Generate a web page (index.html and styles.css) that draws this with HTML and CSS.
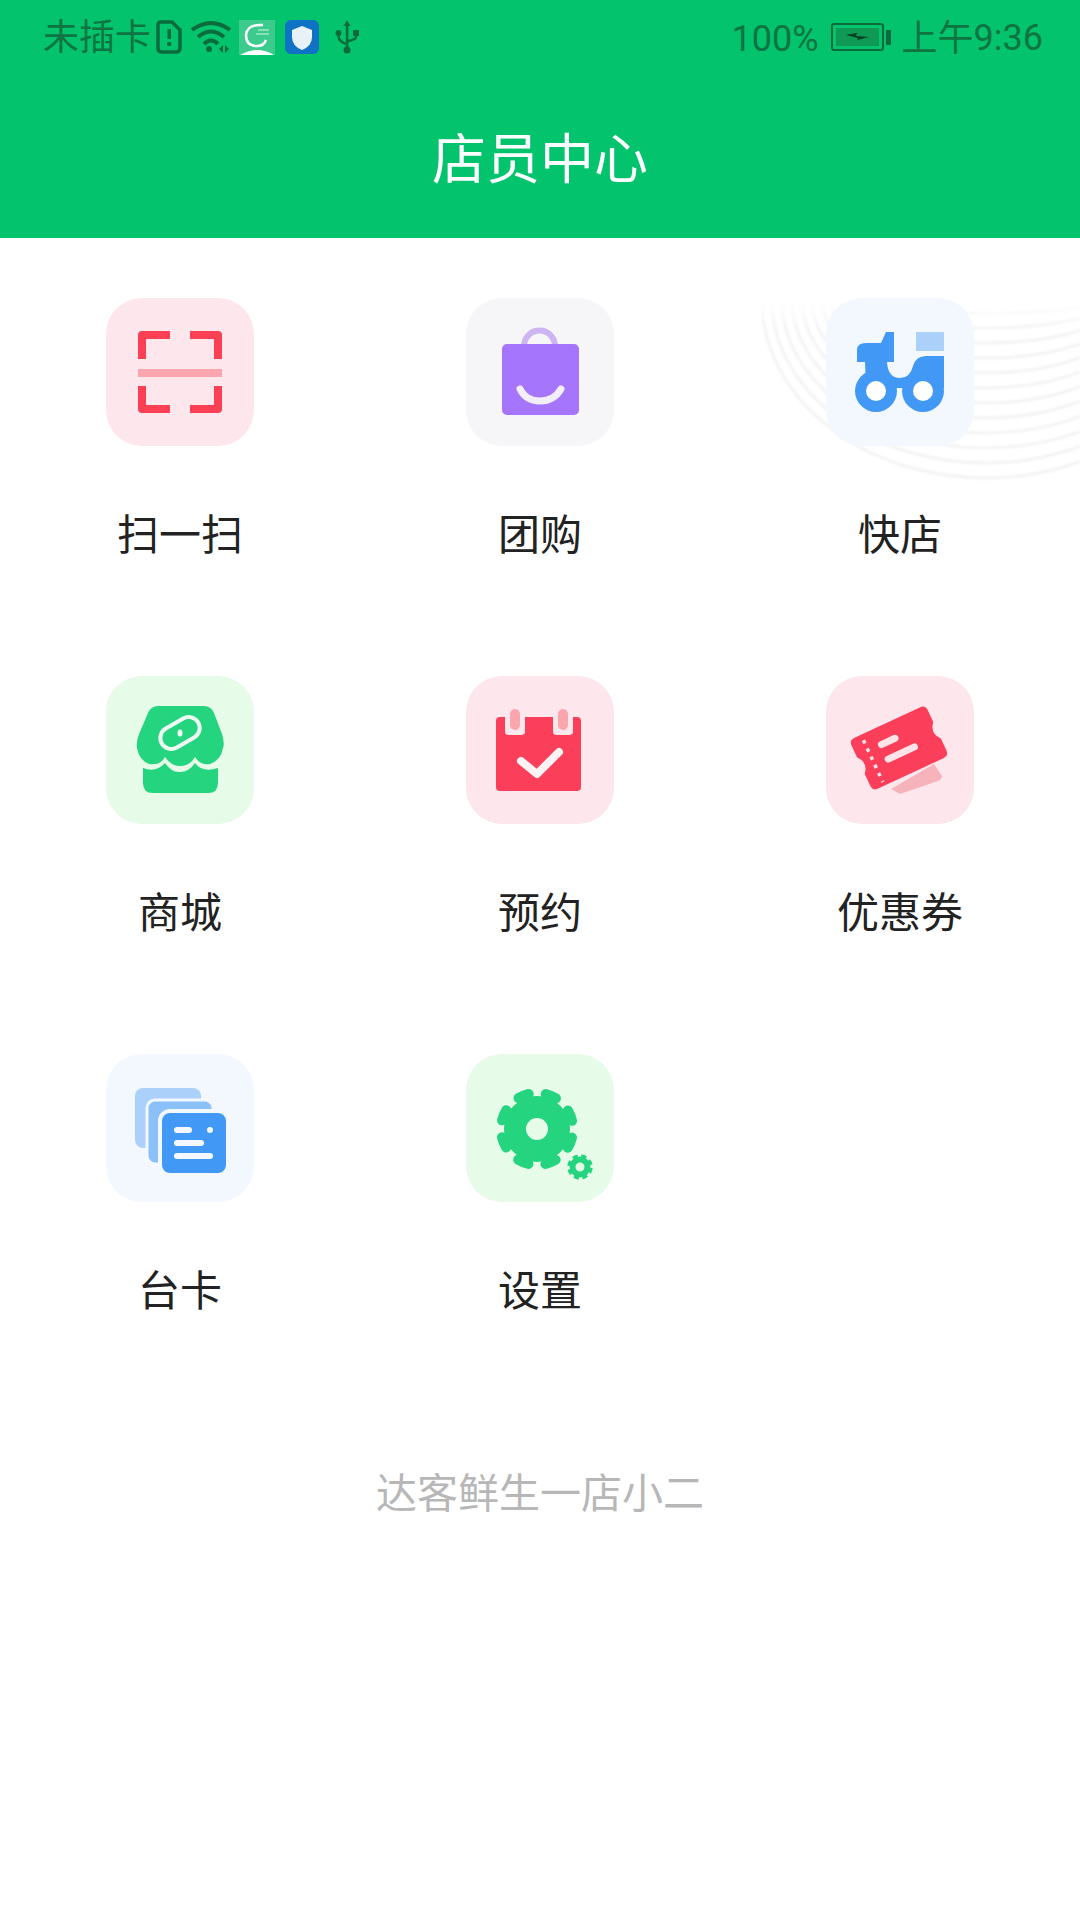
FILE: index.html
```html
<!DOCTYPE html>
<html>
<head>
    <title>店员中心</title>
    <link rel="stylesheet" href="styles.css">
</head>
<body>
    <div class="header">
        <div class="status-bar">
            <div class="status-left">
                <span class="carrier">未插卡</span>
                <svg class="sim" width="26" height="34" viewBox="0 0 26 34">
                    <path d="M5 2H16L24 10V28Q24 32 20 32H6Q2 32 2 28V5Q2 2 5 2Z" fill="none" stroke="#0b6b3c" stroke-width="3.500"/>
                    <rect x="11.500" y="9" width="3.500" height="10" fill="#0b6b3c"/>
                    <circle cx="13.200" cy="24" r="2.200" fill="#0b6b3c"/>
                </svg>
                <svg class="wifi" width="40" height="34" viewBox="0 0 40 34">
                    <g fill="none" stroke="#0b6b3c" stroke-width="4">
                        <path d="M1 10Q20 -4 39 10"/>
                        <path d="M7 17Q20 6 33 17"/>
                        <path d="M13 24Q20 17 27 24"/>
                    </g>
                    <circle cx="18" cy="29" r="3" fill="#0b6b3c"/>
                    <path d="M28 29L32 25V33ZM34 25L38 29L34 33Z" fill="#0b6b3c"/>
                </svg>
                <svg class="app-logo" width="36" height="35" viewBox="0 0 36 35">
                    <rect width="36" height="35" fill="#3ccb8d"/>
                    <path d="M24 5Q8 4 7 15Q7 26 18 26Q25 26 27 20" fill="none" stroke="#fff" stroke-width="2.500"/>
                    <path d="M17 14H30M19 10H30" stroke="#d6f5e6" stroke-width="1"/>
                    <path d="M1 35Q18 25 35 35Z" fill="#fff"/>
                </svg>
                <svg class="shield" width="34" height="34" viewBox="0 0 34 34">
                    <rect width="34" height="34" rx="6" fill="#0f72c4"/>
                    <path d="M17 6L27 10V17Q27 26 17 30Q7 26 7 17V10Z" fill="#e8f1f5"/>
                </svg>
                <svg class="usb" width="24" height="34" viewBox="0 0 24 34">
                    <g fill="#0b6b3c">
                        <path d="M12 0L15.500 6H8.500Z"/>
                        <rect x="10.800" y="4" width="2.600" height="24"/>
                        <circle cx="3.500" cy="13" r="3"/>
                        <rect x="18" y="10" width="6" height="6"/>
                        <circle cx="12" cy="30" r="3.500"/>
                    </g>
                    <path d="M3.500 14V17Q4 21 11 24M21 15V17Q20 20 13 21" fill="none" stroke="#0b6b3c" stroke-width="2.400"/>
                </svg>
            </div>
            <div class="status-right">
                <span class="percent">100%</span>
                <svg class="battery" width="60" height="30" viewBox="0 0 60 30">
                    <rect x="1" y="2" width="51" height="26" rx="2" fill="none" stroke="#0b6b3c" stroke-width="2"/>
                    <rect x="5" y="6" width="43" height="18" fill="#0e9a55"/>
                    <path d="M15 13L26 11L25 14L38 15L26 18L27 16Z" fill="#063d22"/>
                    <rect x="55" y="8" width="5" height="15" rx="1" fill="#0b6b3c"/>
                </svg>
                <span class="clock"><span class="cjk">上午</span><span>9:36</span></span>
            </div>
        </div>
        <h1 class="title">店员中心</h1>
    </div>

    <div class="menu">
        <!-- faint rings behind the third icon -->
        <svg class="rings" width="320" height="190" viewBox="0 0 320 190">
            <g fill="none" stroke="#f3f3f3" stroke-width="3">
                <ellipse cx="226" cy="0" rx="224" ry="178"/>
                <ellipse cx="226" cy="0" rx="214" ry="163"/>
                <ellipse cx="226" cy="0" rx="204" ry="148"/>
                <ellipse cx="226" cy="0" rx="194" ry="133"/>
                <ellipse cx="226" cy="0" rx="184" ry="118"/>
                <ellipse cx="226" cy="0" rx="174" ry="103"/>
                <ellipse cx="226" cy="0" rx="164" ry="88"/>
                <ellipse cx="226" cy="0" rx="154" ry="73"/>
                <ellipse cx="226" cy="0" rx="144" ry="58"/>
                <ellipse cx="226" cy="0" rx="134" ry="43"/>
                <ellipse cx="226" cy="0" rx="124" ry="28"/>
                <ellipse cx="226" cy="0" rx="114" ry="13"/>
            </g>
        </svg>

        <div class="menu-item">
            <div class="icon tint-pink">
                <svg width="148" height="148" viewBox="0 0 148 148">
                    <path d="M36 61V37H64M84 37H112V61M36 88V111H64M84 111H112V88" fill="none" stroke="#fb4056" stroke-width="8" stroke-linejoin="round"/>
                    <rect x="32" y="71" width="84" height="8" fill="#fba6af"/>
                </svg>
            </div>
            <div class="label">扫一扫</div>
        </div>

        <div class="menu-item">
            <div class="icon tint-grey">
                <svg width="148" height="148" viewBox="0 0 148 148">
                    <path d="M58 48A15.500 15.500 0 0 1 89 48" fill="none" stroke="#cdb4f2" stroke-width="6"/>
                    <rect x="36" y="46" width="77" height="71" rx="5" fill="#a576fb"/>
                    <path d="M54 91Q60 103 74 103Q88 103 95 91" fill="none" stroke="#f3eefc" stroke-width="7" stroke-linecap="round"/>
                </svg>
            </div>
            <div class="label">团购</div>
        </div>

        <div class="menu-item">
            <div class="icon tint-blue">
                <svg width="148" height="148" viewBox="0 0 148 148">
                    <rect x="90" y="34" width="28" height="19" fill="#abd0fa"/>
                    <g fill="#4299f5">
                        <path d="M31 64V52Q31 45 40 45H55L60 34H68V64Z"/>
                        <path d="M39 64H61Q62 80 74 80Q84 80 87 68Q90 58 100 58H118V90H40Z"/>
                        <circle cx="50" cy="93" r="21"/>
                        <circle cx="97" cy="93" r="21"/>
                    </g>
                    <circle cx="50" cy="93" r="10" fill="#fff"/>
                    <circle cx="97" cy="93" r="10" fill="#fff"/>
                </svg>
            </div>
            <div class="label">快店</div>
        </div>

        <div class="menu-item">
            <div class="icon tint-green">
                <svg width="148" height="148" viewBox="0 0 148 148">
                    <path d="M52 30H98Q105 30 108 37L116 58Q119 68 117 72Q115 84 104 88Q95 90 89 81Q84 90 74 90Q65 90 59 81Q54 90 43 88Q33 84 31 72Q30 66 33 58L42 37Q45 30 52 30Z" fill="#25d47e"/>
                    <path d="M37 92Q50 97 59 87Q66 97 74 96Q83 96 89 87Q96 97 112 92V107Q112 117 102 117H47Q37 117 37 107Z" fill="#25d47e"/>
                    <rect x="53" y="46" width="42" height="22" rx="11" transform="rotate(-30 74 57)" fill="none" stroke="#eefbf2" stroke-width="4"/>
                    <ellipse cx="74" cy="57" rx="2.500" ry="3.500" fill="#eefbf2"/>
                </svg>
            </div>
            <div class="label">商城</div>
        </div>

        <div class="menu-item">
            <div class="icon tint-pink">
                <svg width="148" height="148" viewBox="0 0 148 148">
                    <rect x="30" y="41" width="85" height="74" rx="4" fill="#fb3f5b"/>
                    <path d="M39 40H59V56Q59 59 55 59H43Q39 59 39 56ZM87 40H107V56Q107 59 103 59H91Q87 59 87 56Z" fill="#fde6ec"/>
                    <rect x="44" y="33" width="10" height="21" rx="5" fill="#fba6af"/>
                    <rect x="92" y="33" width="10" height="21" rx="5" fill="#fba6af"/>
                    <path d="M55 85L71 98L93 76" fill="none" stroke="#fdf3f5" stroke-width="8" stroke-linecap="round" stroke-linejoin="round"/>
                </svg>
            </div>
            <div class="label">预约</div>
        </div>

        <div class="menu-item">
            <div class="icon tint-pink">
                <svg width="148" height="148" viewBox="0 0 148 148">
                    <path d="M65 113L108 88L116 100Q116 103 112 105L74 118Z" fill="#f6b3bc"/>
                    <g transform="rotate(-25 73 72)">
                        <path d="M37 44H109Q115 44 115 50V63Q107 72 115 81V94Q115 100 109 100H37Q31 100 31 94V81Q39 72 31 63V50Q31 44 37 44Z" fill="#fb3f5b"/>
                        <path d="M44 50V96" stroke="#ffe3e8" stroke-width="3.500" stroke-dasharray="3.500 5.500"/>
                        <rect x="55" y="58" width="22" height="7" rx="3.500" fill="#ffe3e8"/>
                        <rect x="55" y="74" width="36" height="7" rx="3.500" fill="#ffe3e8"/>
                    </g>
                </svg>
            </div>
            <div class="label">优惠券</div>
        </div>

        <div class="menu-item">
            <div class="icon tint-blue">
                <svg width="148" height="148" viewBox="0 0 148 148">
                    <rect x="29" y="34" width="66" height="60" rx="8" fill="#abd0fa"/>
                    <rect x="41" y="46" width="66" height="64" rx="8" fill="#8cc0f8" stroke="#f3f8fe" stroke-width="3"/>
                    <rect x="54" y="57" width="68" height="64" rx="10" fill="#4299f5" stroke="#f3f8fe" stroke-width="4"/>
                    <g fill="#f5f9ff">
                        <rect x="68" y="73" width="18" height="6" rx="3"/>
                        <rect x="68" y="86" width="30" height="6" rx="3"/>
                        <rect x="68" y="99" width="39" height="6" rx="3"/>
                        <circle cx="104" cy="76" r="3"/>
                    </g>
                </svg>
            </div>
            <div class="label">台卡</div>
        </div>

        <div class="menu-item">
            <div class="icon tint-green">
                <svg width="148" height="148" viewBox="0 0 148 148">
                    <circle cx="71" cy="75" r="22" fill="none" stroke="#25d47e" stroke-width="22"/>
                    <circle cx="71" cy="75" r="36" fill="none" stroke="#25d47e" stroke-width="10" stroke-linecap="round" stroke-dasharray="11 17.270" stroke-dashoffset="-8.640"/>
                    <circle cx="114" cy="113" r="7.500" fill="none" stroke="#25d47e" stroke-width="6"/>
                    <circle cx="114" cy="113" r="11" fill="none" stroke="#25d47e" stroke-width="3.500" stroke-dasharray="5 3.640" stroke-dashoffset="-1"/>
                </svg>
            </div>
            <div class="label">设置</div>
        </div>
    </div>

    <div class="footer">达客鲜生一店小二</div>
</body>
</html>
```

FILE: styles.css
```css
body {
    margin: 0;
    background-color: #fff;
    font-family: "Noto Sans CJK SC", "Noto Sans", sans-serif;
}
.header {
    height: 238px;
    background-color: #03c46c;
}
.status-bar {
    height: 74px;
    padding: 0 37px 0 43px;
    display: flex;
    justify-content: space-between;
    align-items: center;
    font-family: Roboto, "Noto Sans CJK SC", sans-serif;
    font-size: 36px;
    line-height: 40px;
    color: #0e7442;
}
.status-left, .status-right, .clock {
    display: flex;
    align-items: center;
}
.carrier {
    margin-top: 2px;
}
.percent {
    margin-top: 3px;
}
.clock {
    margin-top: 2px;
}
.cjk {
    margin-top: 1px;
}
.sim {
    margin-left: 5px;
}
.wifi {
    margin-left: 9px;
}
.app-logo {
    margin-left: 8px;
}
.shield {
    margin-left: 10px;
}
.usb {
    margin-left: 16px;
}
.battery {
    margin: 0 11px 0 12px;
}
.title {
    margin: 47px 0 0;
    text-align: center;
    font-size: 54px;
    font-weight: 400;
    line-height: 70px;
    color: #fff;
}
.menu {
    position: relative;
    padding-top: 60px;
    display: grid;
    grid-template-columns: repeat(3, 360px);
    row-gap: 119px;
}
.rings {
    position: absolute;
    top: 62px;
    right: 0;
    filter: blur(1px);
    -webkit-mask-image: linear-gradient(to bottom, transparent, #000 30px);
    mask-image: linear-gradient(to bottom, transparent, #000 30px);
}
.menu-item {
    position: relative;
    display: flex;
    flex-direction: column;
    align-items: center;
}
.icon {
    width: 148px;
    height: 148px;
    border-radius: 36px;
}
.icon svg {
    display: block;
}
.tint-pink {
    background-color: #fde6ec;
}
.tint-grey {
    background-color: #f6f6f9;
}
.tint-blue {
    background-color: #f3f8fe;
}
.tint-green {
    background-color: #e6fbe8;
}
.label {
    margin-top: 61px;
    font-size: 42px;
    line-height: 50px;
    color: #222;
}
.footer {
    margin-top: 152px;
    text-align: center;
    font-size: 41px;
    line-height: 50px;
    color: #b7b7b7;
}
```
